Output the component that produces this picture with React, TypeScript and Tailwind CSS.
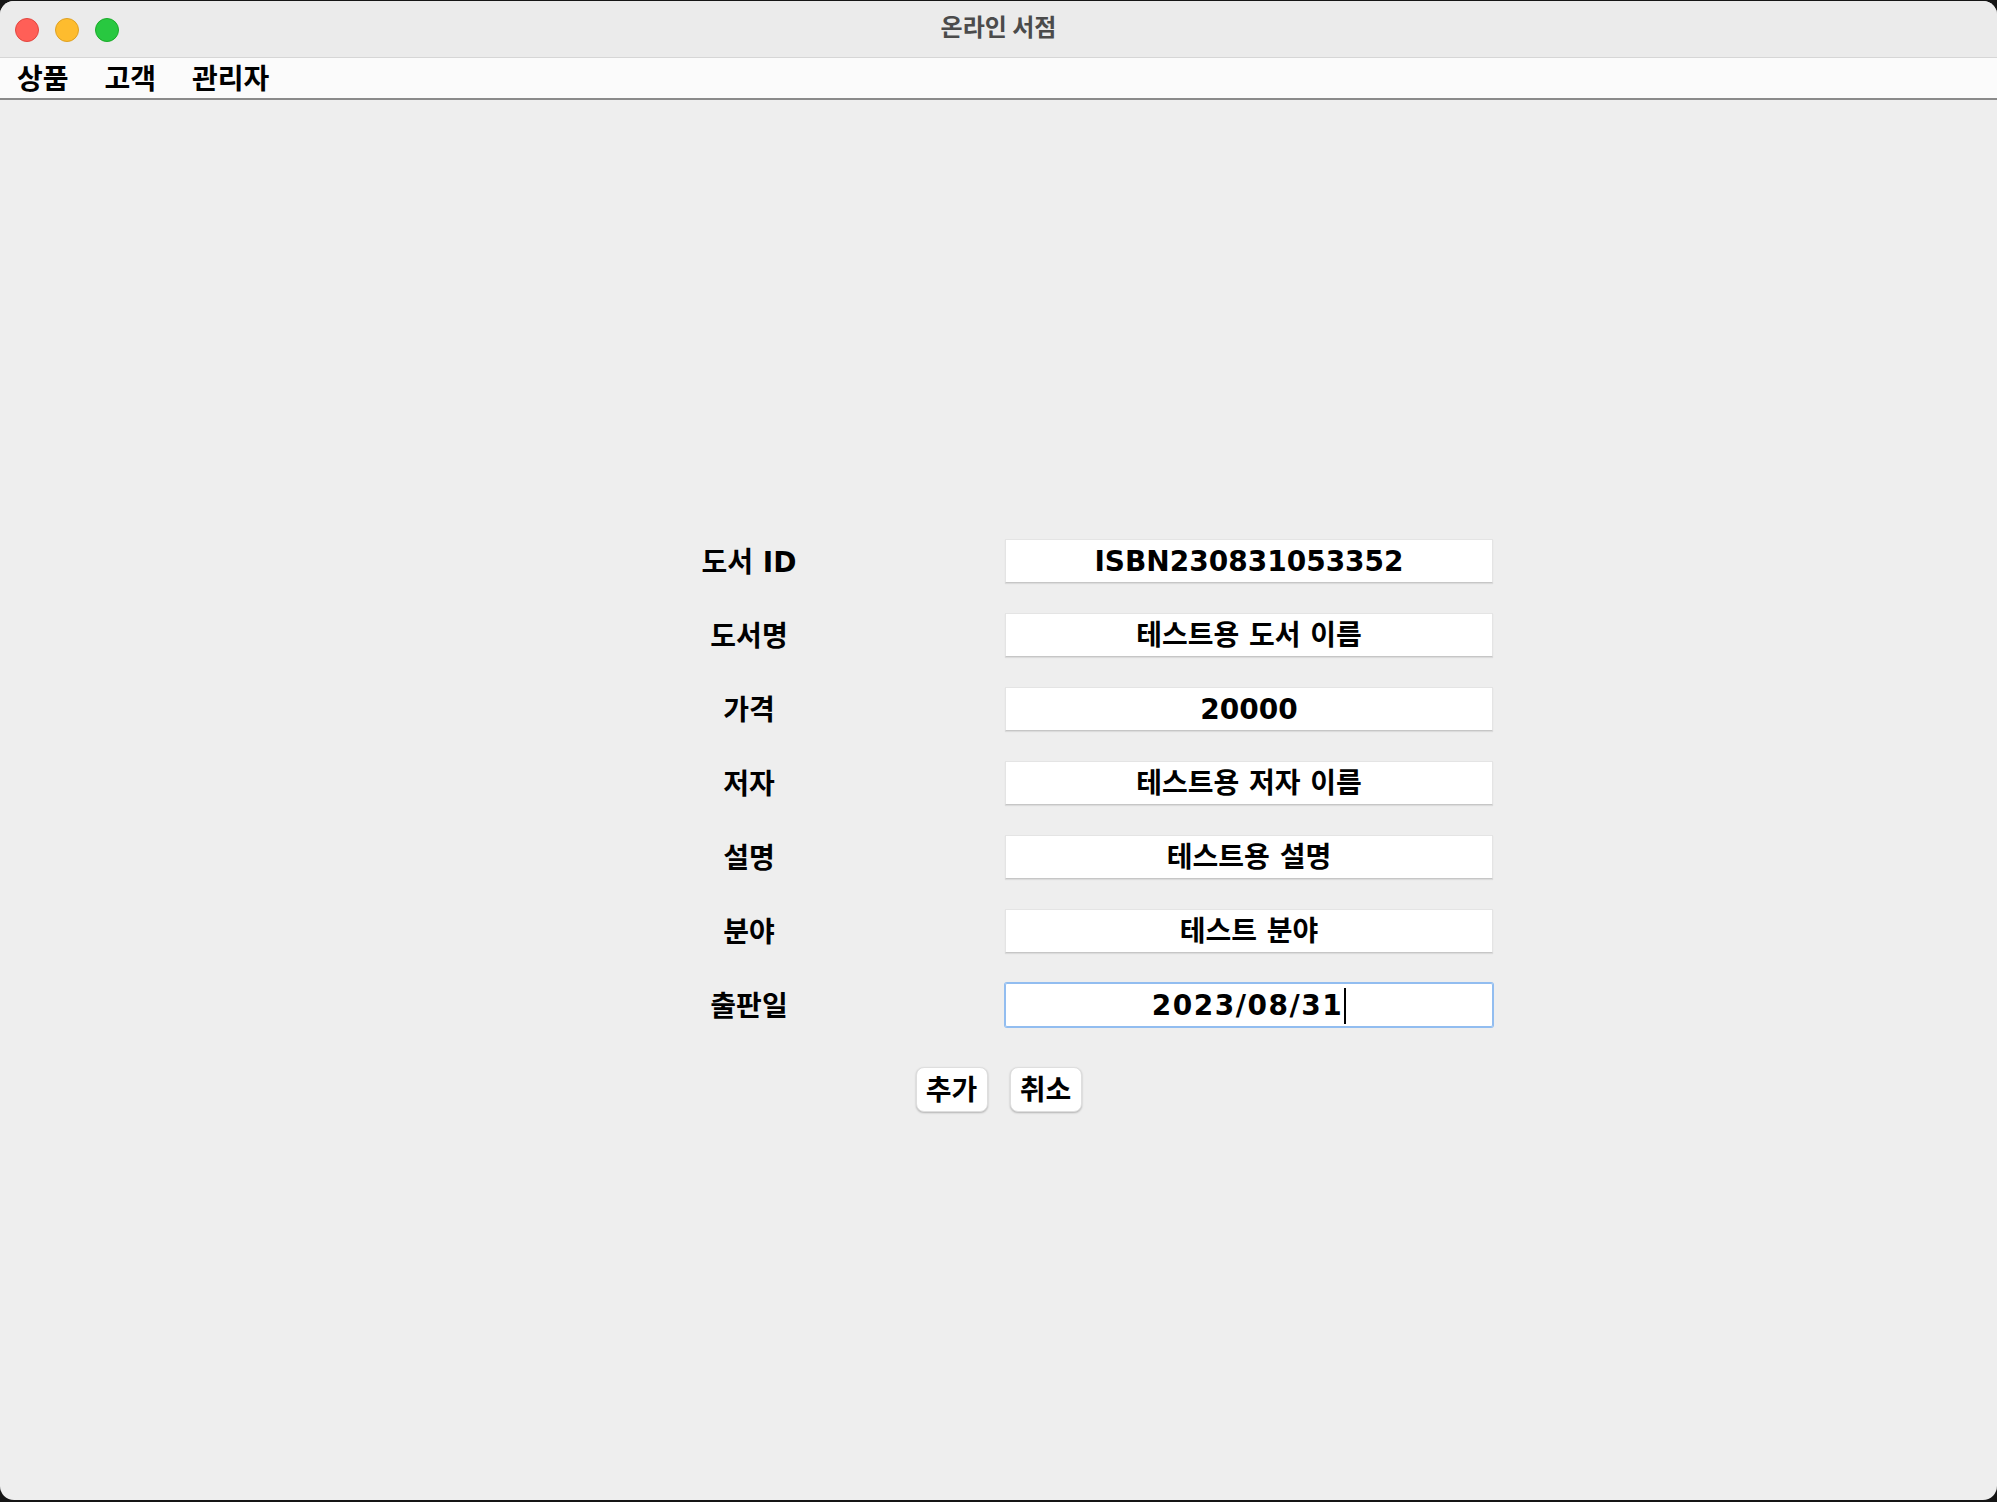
const FONT = "font-['DejaVu_Sans','Noto_Sans_CJK_KR',sans-serif] font-bold";

interface Field {
  label: string;
  value: string;
  focused?: boolean;
}

const fields: Field[] = [
  { label: "도서 ID", value: "ISBN230831053352" },
  { label: "도서명", value: "테스트용 도서 이름" },
  { label: "가격", value: "20000" },
  { label: "저자", value: "테스트용 저자 이름" },
  { label: "설명", value: "테스트용 설명" },
  { label: "분야", value: "테스트 분야" },
  { label: "출판일", value: "2023/08/31", focused: true },
];

const menus = ["상품", "고객", "관리자"];

const TitleBar = () => (
  <div className="relative h-[57px] bg-[#ebebeb] border-b border-[#d6d6d6] flex items-center justify-center">
    <div className="absolute left-[15px] top-[17px] flex gap-[16px]">
      <span className="w-[24px] h-[24px] rounded-full bg-[#ff5f57] border border-[#e2463f]" />
      <span className="w-[24px] h-[24px] rounded-full bg-[#febc2e] border border-[#dea123]" />
      <span className="w-[24px] h-[24px] rounded-full bg-[#28c840] border border-[#1aab29]" />
    </div>
    <span className="font-['Noto_Sans_CJK_KR',sans-serif] font-bold text-[24px] text-[#4b4b4b] mt-[-6px]">
      온라인 서점
    </span>
  </div>
);

const MenuBar = () => (
  <div className="h-[42px] bg-[#fbfbfb] border-b-2 border-[#8a8a8a] flex items-center pl-[17px] gap-[36px]">
    {menus.map((m) => (
      <span key={m} className={`${FONT} text-[28px] leading-none text-black mt-[3px]`}>
        {m}
      </span>
    ))}
  </div>
);

const FormRow = ({ label, value, focused }: Field) => (
  <div className="flex items-center h-[44px]">
    <div className={`w-[488px] text-center text-[28px] text-black leading-none mt-[4px] ${FONT}`}>{label}</div>
    <div
      className={`relative ml-[12px] w-[488px] h-[44px] bg-white flex items-center justify-center text-[28px] leading-none text-black ${FONT} ${
        focused
          ? "shadow-[0_0_0_1px_#92bdf0,inset_0_0_0_1px_#92bdf0] rounded-[2px] tracking-[1.5px]"
          : "border border-[#e4e4e4] border-b-[#c6c6c6] shadow-[0_1px_1px_rgba(0,0,0,0.08)]"
      }`}>
      <span className="flex items-center mt-[2px]">
        {value}
        {focused && <span className="ml-[1px] w-[2px] h-[36px] bg-black" />}
      </span>
    </div>
  </div>
);

const Btn = ({ text }: { text: string }) => (
  <button
    className={`w-[72px] h-[45px] bg-white rounded-[8px] border border-[#dedede] shadow-[0_1px_2px_rgba(0,0,0,0.25)] text-[28px] leading-none text-black pt-[2px] ${FONT}`}>
    {text}
  </button>
);

export default function App() {
  return (
    <div className="w-[1997px] h-[1502px] bg-[#151515] pt-px pb-[2px]">
      <div className="w-full h-full rounded-[14px] overflow-hidden bg-[#eeeeee] flex flex-col">
        <TitleBar />
        <MenuBar />
        <div className="flex-1 flex flex-col pt-[439px]">
          <div className="flex flex-col gap-[30px] pl-[505px]">
            {fields.map((f) => (
              <FormRow key={f.label} {...f} />
            ))}
          </div>
          <div className="flex justify-center gap-[22px] mt-[40px]">
            <Btn text="추가" />
            <Btn text="취소" />
          </div>
        </div>
      </div>
    </div>
  );
}
